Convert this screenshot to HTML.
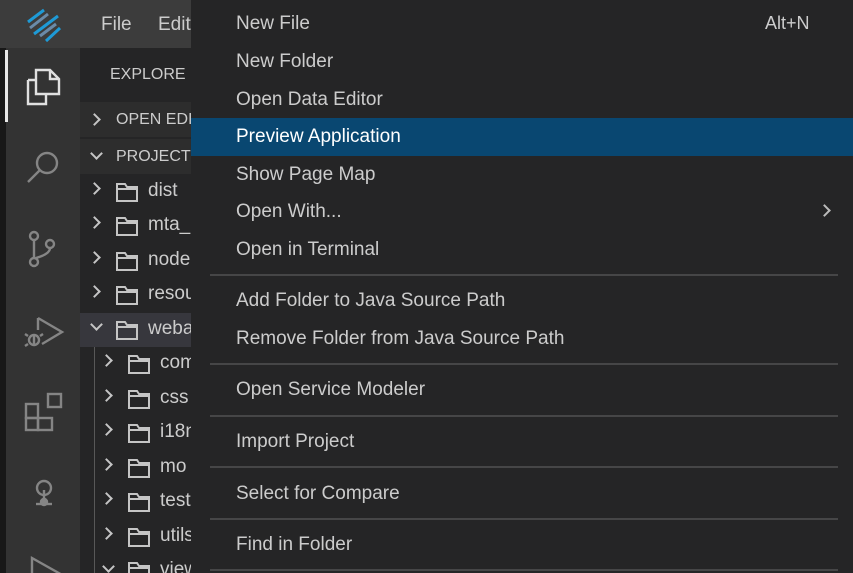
<!DOCTYPE html>
<html style="width:853px;height:573px;overflow:hidden"><head><meta charset="utf-8"><style>
*{margin:0;padding:0;box-sizing:border-box}
body{width:853px;height:573px;overflow:hidden;background:#252526;font-family:"Liberation Sans",Arial,sans-serif;position:relative}
.abs{position:absolute}
.t{color:#cccccc;font-size:19px;white-space:nowrap}
.mi{position:absolute;left:236px;color:#cccccc;font-size:19px;white-space:nowrap;line-height:22px}
.sep{position:absolute;left:210px;width:628px;height:2px;background:#464647}
.row{position:absolute;left:80px;width:111px;height:34px;color:#cccccc;font-size:19px;white-space:nowrap;overflow:hidden}
.chev{position:absolute;top:9px;width:9px;height:9px;border-right:2px solid #c5c5c5;border-bottom:2px solid #c5c5c5;transform:rotate(-45deg)}
.chevd{position:absolute;top:6px;width:9px;height:9px;border-right:2px solid #c5c5c5;border-bottom:2px solid #c5c5c5;transform:rotate(45deg)}
.fold{position:absolute;top:6px}
</style></head><body>
<div class="abs" style="left:0;top:0;width:191px;height:48px;background:#3c3c3c"></div>
<svg class="abs" style="left:24px;top:8px" width="40" height="36" viewBox="0 0 40 36">
<path d="M20 2 L4 14 M34 8 L10 26 M36 20 L22 33" stroke="#1e9ad6" stroke-width="3"/>
<path d="M24 6 L6 20 M32 16 L16 28" stroke="#6a8aa8" stroke-width="3"/>
</svg>
<div class="abs t" style="left:101px;top:14px">File</div>
<div class="abs t" style="left:158px;top:14px">Edit</div>
<div class="abs" style="left:0;top:48px;width:6px;height:525px;background:#181818"></div>
<div class="abs" style="left:6px;top:48px;width:74px;height:525px;background:#333333"></div>
<div class="abs" style="left:5px;top:50px;width:3px;height:72px;background:#e8e8e8"></div>
<svg class="abs" style="left:24px;top:66px" width="40" height="40" viewBox="0 0 40 40" fill="none" stroke="#e0e0e0" stroke-width="2.4">
<path d="M12 4 H26 L35 13 V28 H12 Z"/><path d="M26 4 V13 H35"/><path d="M4 14 H12 M4 14 V38 H22 V28"/>
</svg>
<svg class="abs" style="left:24px;top:146px" width="40" height="40" viewBox="0 0 40 40" fill="none" stroke="#858585" stroke-width="2.4">
<circle cx="23" cy="17" r="10"/><path d="M16 24 L4 36"/>
</svg>
<svg class="abs" style="left:26px;top:228px" width="34" height="40" viewBox="0 0 34 40" fill="none" stroke="#858585" stroke-width="2.4">
<circle cx="8" cy="8" r="4"/><circle cx="8" cy="34" r="4"/><circle cx="24" cy="16" r="4"/><path d="M8 12 V30 M24 20 Q24 26 10 30"/>
</svg>
<svg class="abs" style="left:22px;top:310px" width="44" height="44" viewBox="0 0 44 44" fill="none" stroke="#858585" stroke-width="2.4">
<path d="M16 8 L40 22 L20 34 M16 8 V20"/><circle cx="12" cy="30" r="5"/><path d="M6 26 L3 24 M6 34 L3 36 M18 26 L21 24 M12 25 V35"/>
</svg>
<svg class="abs" style="left:24px;top:392px" width="42" height="42" viewBox="0 0 42 42" fill="none" stroke="#858585" stroke-width="2.4">
<rect x="2" y="12" width="12" height="14"/><rect x="2" y="26" width="12" height="12"/><rect x="14" y="26" width="14" height="12"/><rect x="24" y="2" width="13" height="13"/>
</svg>
<svg class="abs" style="left:30px;top:478px" width="30" height="32" viewBox="0 0 30 32" fill="none" stroke="#858585" stroke-width="2.4">
<circle cx="14" cy="10" r="7"/><path d="M14 12 V24"/><path d="M6 26 H22"/><circle cx="14" cy="24" r="3" fill="#858585"/>
</svg>
<svg class="abs" style="left:28px;top:552px" width="40" height="21" viewBox="0 0 40 21" fill="none" stroke="#858585" stroke-width="2.4">
<path d="M4 22 V6 L36 24"/>
</svg>
<div class="abs" style="left:80px;top:48px;width:111px;height:525px;background:#252526"></div>
<div class="abs" style="left:110px;top:66px;color:#cccccc;font-size:16px">EXPLORE</div>
<div class="abs" style="left:80px;top:102px;width:111px;height:35px;background:#2d2d2d"></div>
<div class="abs" style="left:80px;top:139px;width:111px;height:35px;background:#2d2d2d"></div>
<div class="row" style="top:102px"><div class="chev" style="left:10px;top:13px"></div><span class="abs" style="left:36px;top:9px;font-size:16px">OPEN EDITORS</span></div>
<div class="row" style="top:139px"><div class="chevd" style="left:12px;top:10px"></div><span class="abs" style="left:36px;top:9px;font-size:16px">PROJECT</span></div>
<div class="abs" style="left:80px;top:313px;width:111px;height:34px;background:#37373d"></div>
<div class="abs" style="left:94px;top:347px;width:1px;height:226px;background:#585858"></div>
<svg width="0" height="0" style="position:absolute"><defs><symbol id="f" viewBox="0 0 24 22"><path d="M2 3 H10 L12 6 H22 V20 H2 Z M2 8 H22" fill="none" stroke="#c5c5c5" stroke-width="2"/></symbol></defs></svg>
<div class="row" style="top:175px"><div class="chev" style="left:10px"></div><svg class="fold" style="left:35px" width="24" height="22"><use href="#f"/></svg><span class="abs" style="left:68px;top:5px">dist</span></div>
<div class="row" style="top:209px"><div class="chev" style="left:10px"></div><svg class="fold" style="left:35px" width="24" height="22"><use href="#f"/></svg><span class="abs" style="left:68px;top:5px">mta_</span></div>
<div class="row" style="top:244px"><div class="chev" style="left:10px"></div><svg class="fold" style="left:35px" width="24" height="22"><use href="#f"/></svg><span class="abs" style="left:68px;top:5px">node</span></div>
<div class="row" style="top:278px"><div class="chev" style="left:10px"></div><svg class="fold" style="left:35px" width="24" height="22"><use href="#f"/></svg><span class="abs" style="left:68px;top:5px">resou</span></div>
<div class="row" style="top:313px"><div class="chevd" style="left:12px;top:7px"></div><svg class="fold" style="left:35px" width="24" height="22"><use href="#f"/></svg><span class="abs" style="left:68px;top:5px">weba</span></div>
<div class="row" style="top:347px"><div class="chev" style="left:22px"></div><svg class="fold" style="left:47px" width="24" height="22"><use href="#f"/></svg><span class="abs" style="left:80px;top:5px">com</span></div>
<div class="row" style="top:382px"><div class="chev" style="left:22px"></div><svg class="fold" style="left:47px" width="24" height="22"><use href="#f"/></svg><span class="abs" style="left:80px;top:5px">css</span></div>
<div class="row" style="top:416px"><div class="chev" style="left:22px"></div><svg class="fold" style="left:47px" width="24" height="22"><use href="#f"/></svg><span class="abs" style="left:80px;top:5px">i18n</span></div>
<div class="row" style="top:451px"><div class="chev" style="left:22px"></div><svg class="fold" style="left:47px" width="24" height="22"><use href="#f"/></svg><span class="abs" style="left:80px;top:5px">mo</span></div>
<div class="row" style="top:485px"><div class="chev" style="left:22px"></div><svg class="fold" style="left:47px" width="24" height="22"><use href="#f"/></svg><span class="abs" style="left:80px;top:5px">test</span></div>
<div class="row" style="top:520px"><div class="chev" style="left:22px"></div><svg class="fold" style="left:47px" width="24" height="22"><use href="#f"/></svg><span class="abs" style="left:80px;top:5px">utils</span></div>
<div class="row" style="top:554px;height:19px"><div class="chevd" style="left:24px;top:8px"></div><svg class="fold" style="left:47px" width="24" height="22"><use href="#f"/></svg><span class="abs" style="left:80px;top:5px">view</span></div>
<div class="abs" style="left:191px;top:0;width:662px;height:573px;background:#252526"></div>
<div class="abs" style="left:191px;top:118px;width:662px;height:38px;background:#094771"></div>
<div class="mi" style="top:13px">New File</div>
<div class="abs t" style="left:765px;top:13px;font-size:18px">Alt+N</div>
<div class="mi" style="top:51px">New Folder</div>
<div class="mi" style="top:89px">Open Data Editor</div>
<div class="mi" style="top:126px;color:#ffffff">Preview Application</div>
<div class="mi" style="top:164px">Show Page Map</div>
<div class="mi" style="top:201px">Open With...</div>
<div class="abs" style="left:820px;top:206px;width:9px;height:9px;border-right:2px solid #bbb;border-bottom:2px solid #bbb;transform:rotate(-45deg)"></div>
<div class="mi" style="top:239px">Open in Terminal</div>
<div class="sep" style="top:274px"></div>
<div class="mi" style="top:290px">Add Folder to Java Source Path</div>
<div class="mi" style="top:328px">Remove Folder from Java Source Path</div>
<div class="sep" style="top:363px"></div>
<div class="mi" style="top:379px">Open Service Modeler</div>
<div class="sep" style="top:415px"></div>
<div class="mi" style="top:431px">Import Project</div>
<div class="sep" style="top:466px"></div>
<div class="mi" style="top:483px">Select for Compare</div>
<div class="sep" style="top:518px"></div>
<div class="mi" style="top:534px">Find in Folder</div>
<div class="sep" style="top:569px"></div>
</body></html>
